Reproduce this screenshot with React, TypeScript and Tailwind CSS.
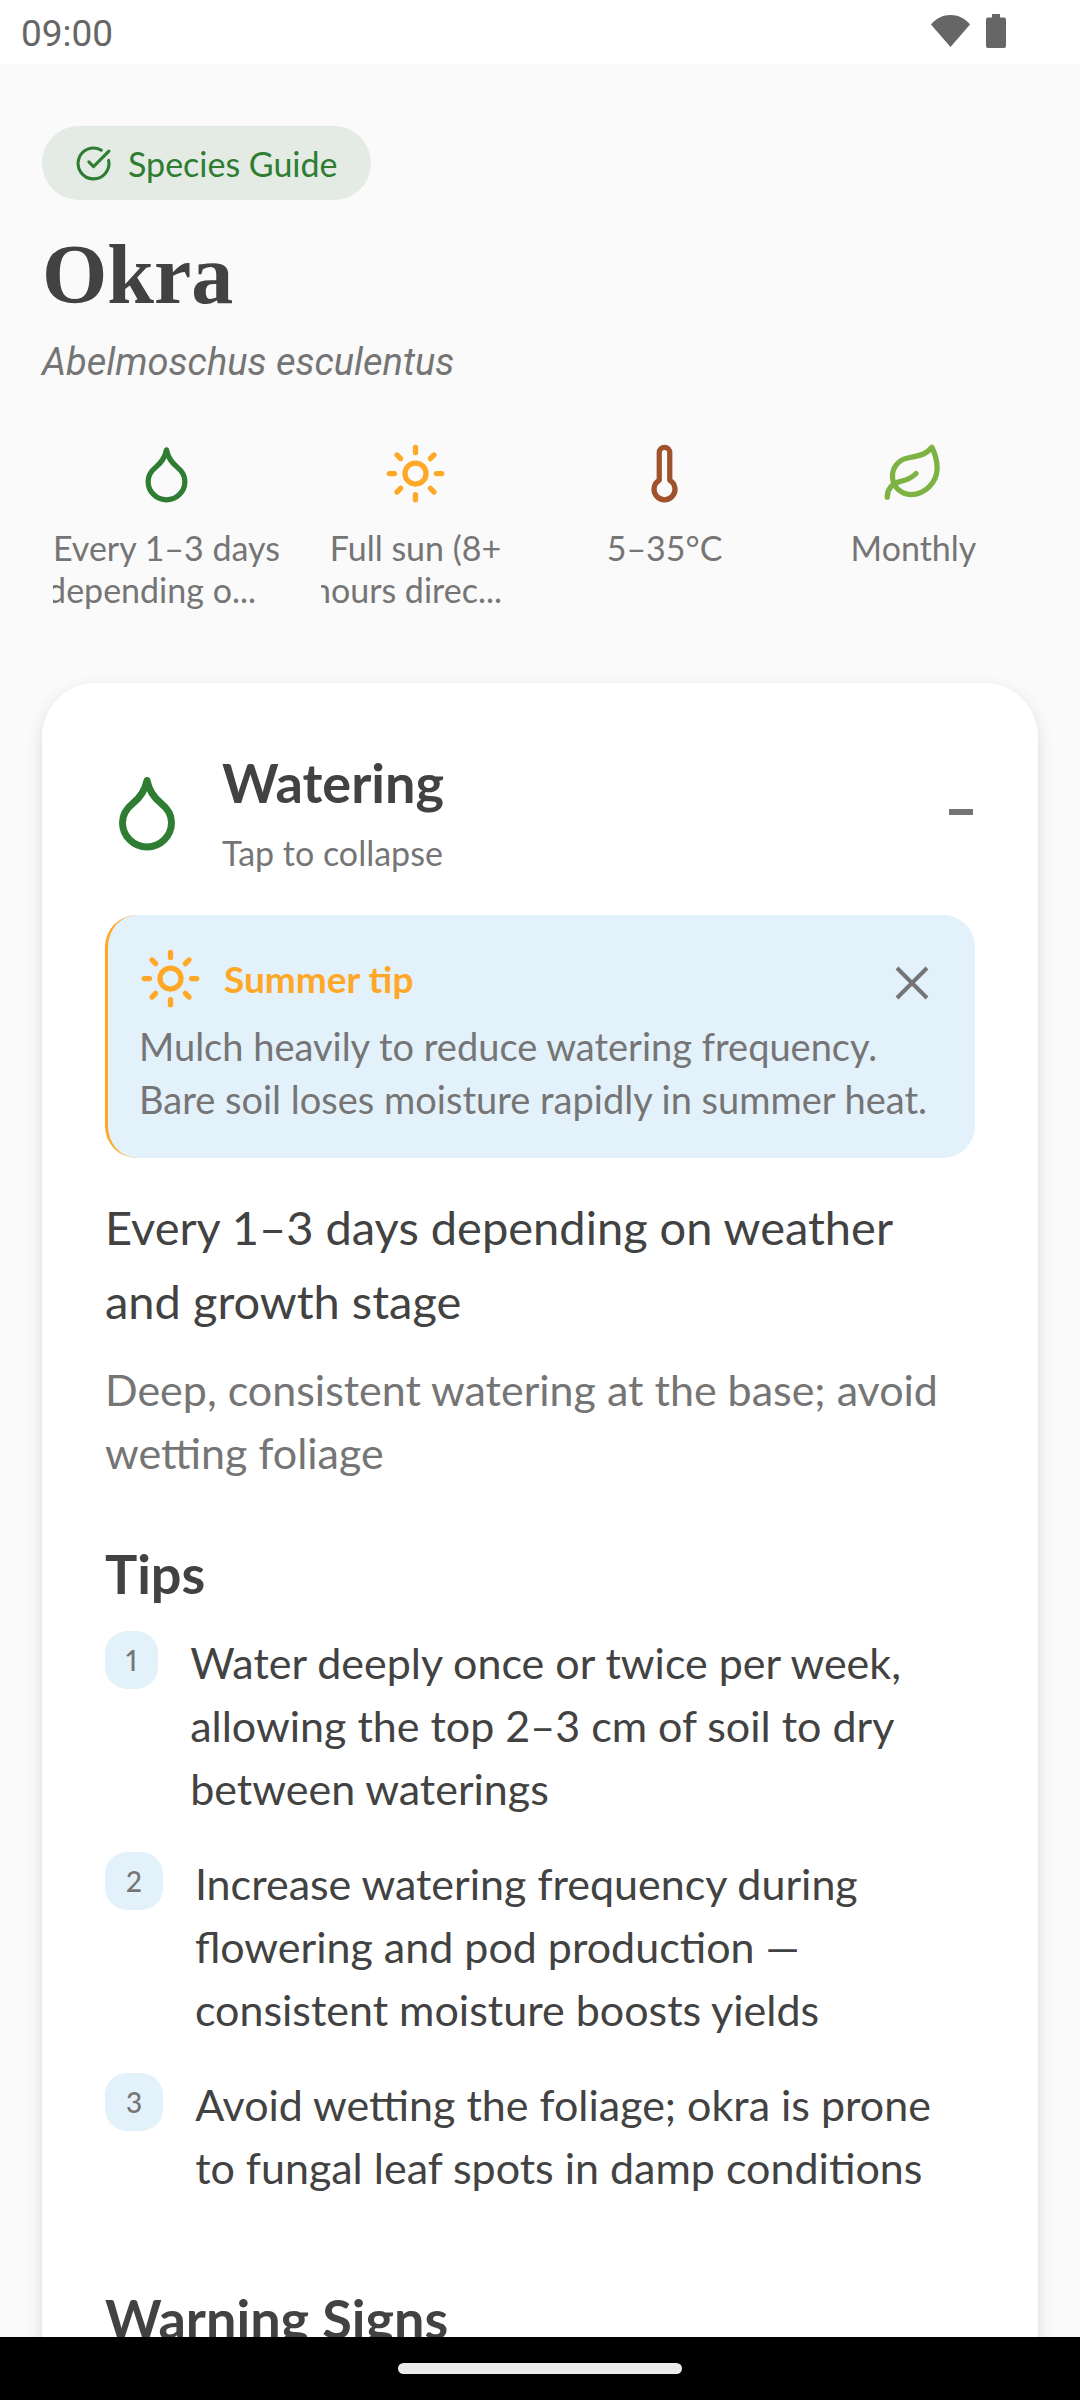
import { useState } from 'react';
import { CircleCheckBig, Droplet, Leaf, Sun, Thermometer } from 'lucide-react';

const stats = [
  {
    icon: <Droplet size={63} className="text-[#2e7d32]" />,
    lines: ['Every 1–3 days', 'depending o...'],
    // long second lines run out of their box on the left
    box: 'w-[227px]',
    inner: 'pr-6',
  },
  {
    icon: <Sun size={63} className="text-[#ffa726]" />,
    lines: ['Full sun (8+', 'hours direc...'],
    box: 'w-[189px]',
    inner: 'pr-2',
  },
  {
    icon: <Thermometer size={63} className="text-[#a0522d]" />,
    lines: ['5–35°C'],
    box: 'w-[189px]',
    inner: '',
  },
  {
    icon: <Leaf size={63} className="text-[#7cb342]" />,
    lines: ['Monthly'],
    box: 'w-[189px]',
    inner: '',
  },
];

const tips = [
  'Water deeply once or twice per week, allowing the top 2–3 cm of soil to dry between waterings',
  'Increase watering frequency during flowering and pod production — consistent moisture boosts yields',
  'Avoid wetting the foliage; okra is prone to fungal leaf spots in damp conditions',
];

function StatusBar() {
  return (
    <header className="flex h-16 shrink-0 items-center justify-between bg-white pr-[74px] pl-[21px] text-[#666666]">
      <span className="pt-0.5 font-['Roboto',sans-serif] text-[37px] leading-none">09:00</span>
      <div className="flex items-center gap-4 pb-0.5">
        <svg width="39" height="32" viewBox="0 0 39 32" fill="currentColor" aria-hidden="true">
          <path d="M0 9.5C5 3.3 12 0 19.5 0S34 3.3 39 9.5L19.5 32Z" />
        </svg>
        <svg width="20" height="34" viewBox="0 0 20 34" fill="currentColor" aria-hidden="true">
          <path d="M6 0h8v3.5h4a2 2 0 0 1 2 2V32a2 2 0 0 1-2 2H2a2 2 0 0 1-2-2V5.5a2 2 0 0 1 2-2h4Z" />
        </svg>
      </div>
    </header>
  );
}

function Stats() {
  return (
    <ul className="mt-14 grid grid-cols-4">
      {stats.map((s) => (
        <li key={s.lines[0]} className="flex flex-col items-center gap-[22px]">
          {s.icon}
          <div className={`overflow-hidden text-[34px] leading-[42px] whitespace-nowrap text-[#757575] ${s.box}`}>
            <p className="flex justify-center">{s.lines[0]}</p>
            {s.lines[1] && <p className={`flex justify-end ${s.inner}`}>{s.lines[1]}</p>}
          </div>
        </li>
      ))}
    </ul>
  );
}

function SummerTip({ onClose }: { onClose: () => void }) {
  return (
    <aside className="mt-[41px] rounded-[32px] border-l-3 border-[#ffa726] bg-[#e3f1fb] py-8 pr-8 pl-[31px]">
      <div className="flex items-center text-[#ffa726]">
        <Sun size={63} />
        <h3 className="ml-[22px] flex-1 text-[37px] font-bold">Summer tip</h3>
        <button type="button" aria-label="Dismiss tip" onClick={onClose} className="mr-3.5 pt-2 text-[#757575]">
          <svg width="34" height="34" viewBox="0 0 34 34" fill="none" stroke="currentColor" strokeWidth="4">
            <path d="M2 2l30 30M32 2L2 32" />
          </svg>
        </button>
      </div>
      <p className="mt-2.5 text-[38px] leading-[53px] text-[#757575]">
        Mulch heavily to reduce watering frequency. Bare soil loses moisture rapidly in summer heat.
      </p>
    </aside>
  );
}

function WateringCard() {
  const [open, setOpen] = useState(true);
  const [showTip, setShowTip] = useState(true);

  return (
    <section className="mt-[72px] rounded-[54px] bg-white px-[63px] pt-[67px] pb-20 text-[#424242] shadow-[0_6px_16px_rgba(40,70,40,0.16)]">
      <button
        type="button"
        aria-expanded={open}
        onClick={() => setOpen(!open)}
        className="flex w-full items-center gap-[33px] text-left"
      >
        <Droplet size={84} className="text-[#2e7d32]" />
        <span className="flex flex-1 flex-col gap-4">
          <span className="text-[54px] leading-[66px] font-bold">Watering</span>
          <span className="text-[34px] leading-[42px] text-[#757575]">
            {open ? 'Tap to collapse' : 'Tap to expand'}
          </span>
        </span>
        <span className="mr-0.5 h-1.5 w-6 bg-[#757575]" />
      </button>

      {open && (
        <>
          {showTip && <SummerTip onClose={() => setShowTip(false)} />}

          <p className="mt-8 text-[47px] leading-[74px]">Every 1–3 days depending on weather and growth stage</p>
          <p className="mt-5 text-[43px] leading-[63px] text-[#757575]">
            Deep, consistent watering at the base; avoid wetting foliage
          </p>

          <h2 className="mt-[57px] text-[54px] leading-[66px] font-bold">Tips</h2>
          <ol className="mt-6 flex flex-col gap-8">
            {tips.map((tip, i) => (
              <li key={tip} className="flex items-start gap-8">
                <span className="rounded-[22px] bg-[#e3f1fb] px-[21px] text-[28px] leading-[58px] font-medium text-[#757575] proportional-nums">
                  {i + 1}
                </span>
                <p className="flex-1 text-[43px] leading-[63px]">{tip}</p>
              </li>
            ))}
          </ol>

          <h2 className="mt-[87px] text-[54px] leading-[66px] font-bold">Warning Signs</h2>
        </>
      )}
    </section>
  );
}

export default function App() {
  return (
    <div className="flex h-screen flex-col bg-[#fafafa] font-['Lato',sans-serif]">
      <StatusBar />

      <main className="min-h-0 flex-1 overflow-hidden px-[42px] pt-[62px]">
        <div className="flex h-[74px] w-fit items-center gap-4 rounded-full bg-[#e3ebe4] px-[33px] text-[#2e7d32]">
          <CircleCheckBig size={37} />
          <span className="text-[34px]">Species Guide</span>
        </div>
        <h1 className="mt-[30px] font-['Liberation_Serif',serif] text-[84px] leading-[90px] font-bold text-[#424242]">
          Okra
        </h1>
        <p className="mt-[18px] font-['Roboto',sans-serif] text-[38px] leading-[48px] text-[#757575] italic">
          Abelmoschus esculentus
        </p>
        <Stats />
        <WateringCard />
      </main>

      <footer className="flex h-[63px] shrink-0 items-center justify-center bg-black">
        <div className="h-[11px] w-[284px] rounded-full bg-[#ebebeb]" />
      </footer>
    </div>
  );
}
